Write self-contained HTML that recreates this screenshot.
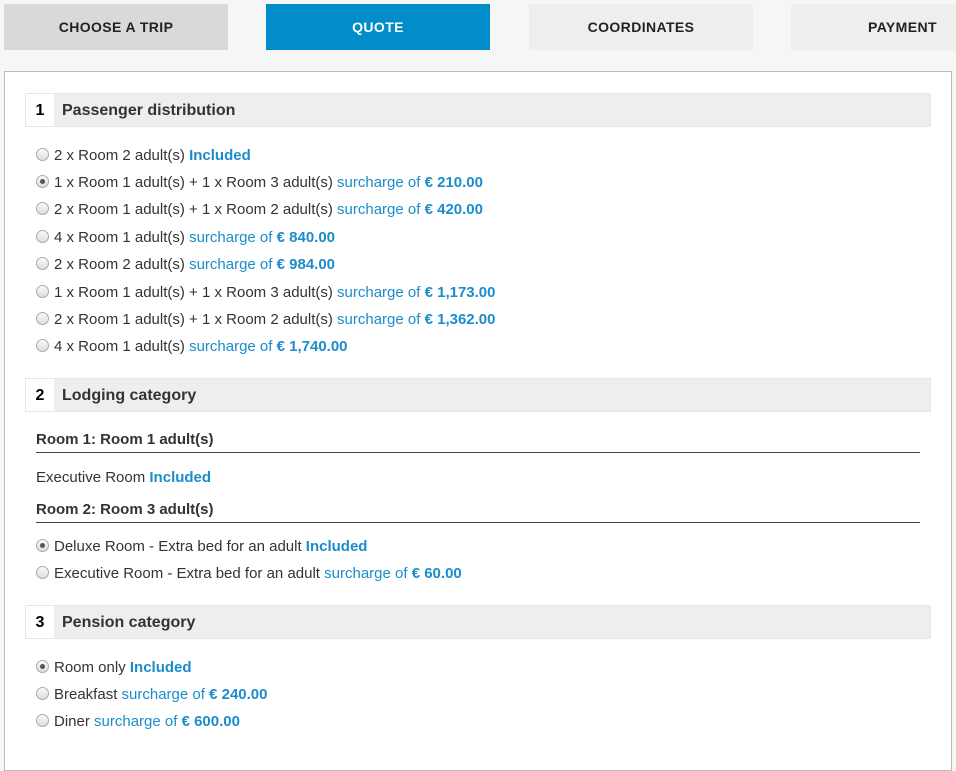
<!DOCTYPE html>
<html><head><style>
*{margin:0;padding:0;box-sizing:border-box}
body{width:956px;height:750px;background:#f6f6f6;font-family:"Liberation Sans",Arial,sans-serif;font-size:15px;color:#333;position:relative;overflow:hidden}
.tab{position:absolute;top:4px;height:46px;width:224px;font-weight:bold;font-size:14px;letter-spacing:0.4px;text-align:center;line-height:46px;color:#222}
.panel{position:absolute;left:4px;top:71px;width:948px;height:700px;background:#fff;border:1px solid #bbb}
.hd{position:absolute;left:25px;width:906px;height:34px;background:#eee;border:1px solid #e6e6e6;font-weight:bold;font-size:16px;line-height:34px}
.hd .n{position:absolute;left:0;top:0;width:28px;height:32px;background:#fff;text-align:center;color:#000}
.hd .t{position:absolute;left:36px}
.r{position:absolute;left:36px;height:20px;line-height:20px;white-space:nowrap;margin-top:2px}
.rb{display:inline-block;width:13px;height:13px;border-radius:50%;border:1px solid #aaa;background:linear-gradient(#fafafa,#ddd);vertical-align:-1px;margin-right:5px;position:relative}
.rb.on::after{content:"";position:absolute;left:3px;top:3px;width:5px;height:5px;border-radius:50%;background:#555}
.s{color:#1b8ccc}
.b{color:#1b8ccc;font-weight:bold}
.rh{position:absolute;left:36px;width:884px;font-weight:bold;font-size:15px;border-bottom:1px solid #444;height:24px;line-height:20px;padding-top:1px}
</style></head><body>
<div class="tab" style="left:4px;background:#d9d9d9">CHOOSE A TRIP</div>
<div class="tab" style="left:266px;background:#008dc9;color:#fff">QUOTE</div>
<div class="tab" style="left:529px;background:#eee">COORDINATES</div>
<div class="tab" style="left:791px;width:170px;background:#eee;text-align:left;padding-left:77px">PAYMENT</div>
<div class="panel"></div>
<div class="hd" style="top:93px"><span class="n">1</span><span class="t">Passenger distribution</span></div>
<div class="r" style="top:144px"><span class="rb"></span>2 x Room 2 adult(s) <span class="b">Included</span></div>
<div class="r" style="top:171px"><span class="rb on"></span>1 x Room 1 adult(s) + 1 x Room 3 adult(s) <span class="s">surcharge of</span> <span class="b">€ 210.00</span></div>
<div class="r" style="top:198px"><span class="rb"></span>2 x Room 1 adult(s) + 1 x Room 2 adult(s) <span class="s">surcharge of</span> <span class="b">€ 420.00</span></div>
<div class="r" style="top:226px"><span class="rb"></span>4 x Room 1 adult(s) <span class="s">surcharge of</span> <span class="b">€ 840.00</span></div>
<div class="r" style="top:253px"><span class="rb"></span>2 x Room 2 adult(s) <span class="s">surcharge of</span> <span class="b">€ 984.00</span></div>
<div class="r" style="top:281px"><span class="rb"></span>1 x Room 1 adult(s) + 1 x Room 3 adult(s) <span class="s">surcharge of</span> <span class="b">€ 1,173.00</span></div>
<div class="r" style="top:308px"><span class="rb"></span>2 x Room 1 adult(s) + 1 x Room 2 adult(s) <span class="s">surcharge of</span> <span class="b">€ 1,362.00</span></div>
<div class="r" style="top:335px"><span class="rb"></span>4 x Room 1 adult(s) <span class="s">surcharge of</span> <span class="b">€ 1,740.00</span></div>
<div class="hd" style="top:378px"><span class="n">2</span><span class="t">Lodging category</span></div>
<div class="rh" style="top:429px">Room 1: Room 1 adult(s)</div>
<div class="r" style="top:466px">Executive Room <span class="b">Included</span></div>
<div class="rh" style="top:499px">Room 2: Room 3 adult(s)</div>
<div class="r" style="top:535px"><span class="rb on"></span>Deluxe Room - Extra bed for an adult <span class="b">Included</span></div>
<div class="r" style="top:562px"><span class="rb"></span>Executive Room - Extra bed for an adult <span class="s">surcharge of</span> <span class="b">€ 60.00</span></div>
<div class="hd" style="top:605px"><span class="n">3</span><span class="t">Pension category</span></div>
<div class="r" style="top:656px"><span class="rb on"></span>Room only <span class="b">Included</span></div>
<div class="r" style="top:683px"><span class="rb"></span>Breakfast <span class="s">surcharge of</span> <span class="b">€ 240.00</span></div>
<div class="r" style="top:710px"><span class="rb"></span>Diner <span class="s">surcharge of</span> <span class="b">€ 600.00</span></div>
</body></html>
